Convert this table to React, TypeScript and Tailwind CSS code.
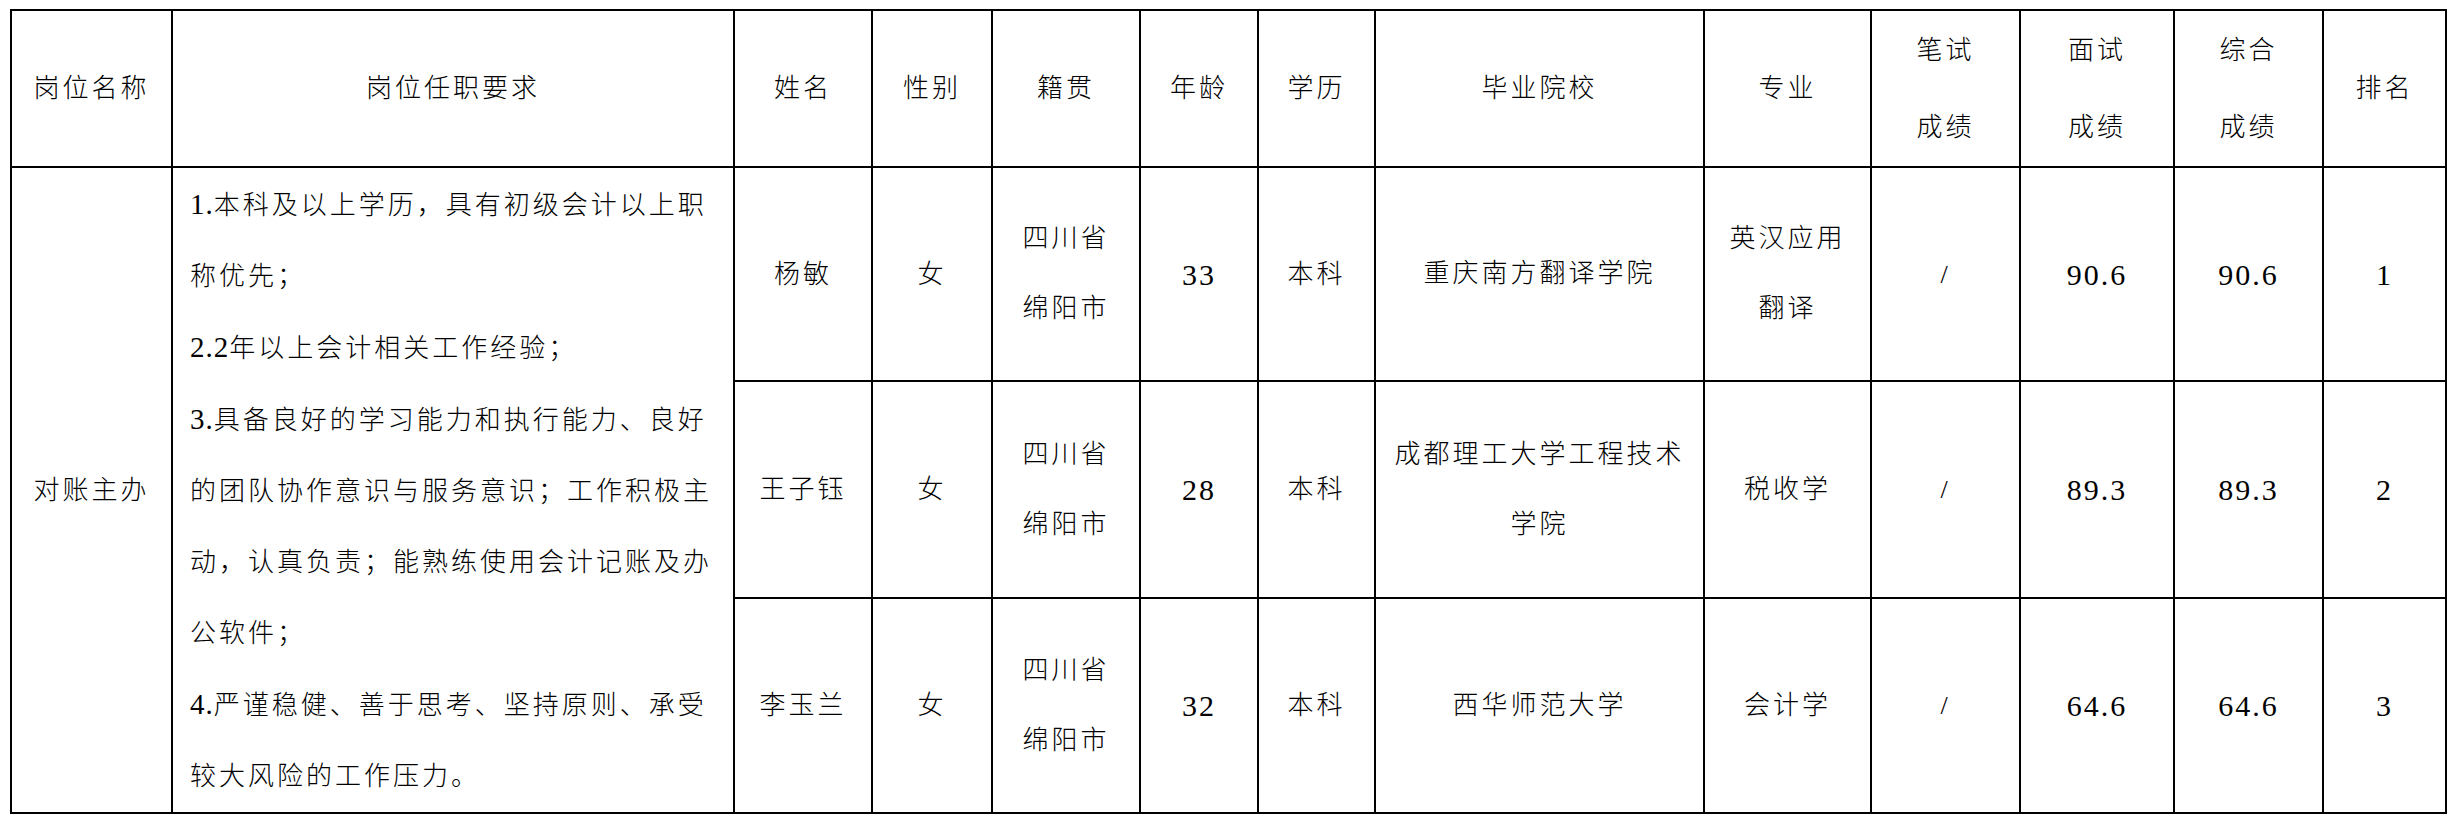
import React from 'react';

const cols = [161, 562, 138, 120, 148, 118, 117, 329, 167, 149, 154, 149, 123];

const requirements = [
  ['1.', '本科及以上学历，具有初级会计以上职'],
  ['', '称优先；'],
  ['2.2', '年以上会计相关工作经验；'],
  ['3.', '具备良好的学习能力和执行能力、良好'],
  ['', '的团队协作意识与服务意识；工作积极主'],
  ['', '动，认真负责；能熟练使用会计记账及办'],
  ['', '公软件；'],
  ['4.', '严谨稳健、善于思考、坚持原则、承受'],
  ['', '较大风险的工作压力。'],
];

const people = [
  { name: '杨敏', school: ['重庆南方翻译学院'], major: ['英汉应用', '翻译'], age: '33', score: '90.6', rank: '1', h: 'h-[214px]' },
  { name: '王子钰', school: ['成都理工大学工程技术', '学院'], major: ['税收学'], age: '28', score: '89.3', rank: '2', h: 'h-[217px]' },
  { name: '李玉兰', school: ['西华师范大学'], major: ['会计学'], age: '32', score: '64.6', rank: '3', h: 'h-[215px]' },
];

const Lines = ({ lines }: { lines: string[] }) => (
  <div className="flex flex-col items-center leading-[70px]">
    {lines.map((l, i) => (
      <span key={i} className="whitespace-nowrap">{l}</span>
    ))}
  </div>
);

const cell = 'border-2 border-black text-center align-middle p-0';
const num = `${cell} text-[30px] tracking-[2px]`;

export default function App() {
  return (
    <div className="w-[2451px] h-[822px] bg-white pt-[9px] pl-[10px] text-black font-['Liberation_Serif','Noto_Sans_CJK_SC',serif] font-light text-[26px] tracking-[3px]">
      <table className="table-fixed border-collapse border-2 border-black w-[2435px]">
        <colgroup>
          {cols.map((w, i) => (
            <col key={i} style={{ width: w }} />
          ))}
        </colgroup>
        <thead>
          <tr className="h-[157px]">
            <th className={`${cell} font-light`}>岗位名称</th>
            <th className={`${cell} font-light`}>岗位任职要求</th>
            <th className={`${cell} font-light`}>姓名</th>
            <th className={`${cell} font-light`}>性别</th>
            <th className={`${cell} font-light`}>籍贯</th>
            <th className={`${cell} font-light`}>年龄</th>
            <th className={`${cell} font-light`}>学历</th>
            <th className={`${cell} font-light`}>毕业院校</th>
            <th className={`${cell} font-light`}>专业</th>
            {['笔试', '面试', '综合'].map((t) => (
              <th key={t} className={`${cell} font-light`}>
                <div className="flex flex-col items-center leading-[77px]">
                  <span>{t}</span>
                  <span>成绩</span>
                </div>
              </th>
            ))}
            <th className={`${cell} font-light`}>排名</th>
          </tr>
        </thead>
        <tbody>
          {people.map((p, i) => (
            <tr key={p.name} className={p.h}>
              {i === 0 && (
                <>
                  <td rowSpan={3} className={cell}>对账主办</td>
                  <td rowSpan={3} className="border-2 border-black align-middle p-0 pl-[17px]">
                    <div className="flex flex-col leading-[71px]">
                      {requirements.map(([n, r], j) => (
                        <span key={j} className="whitespace-nowrap">
                          {n && <span className="text-[29px] tracking-[1px]">{n}</span>}
                          {r}
                        </span>
                      ))}
                    </div>
                  </td>
                </>
              )}
              <td className={cell}>{p.name}</td>
              <td className={cell}>女</td>
              <td className={cell}>
                <Lines lines={['四川省', '绵阳市']} />
              </td>
              <td className={num}>{p.age}</td>
              <td className={cell}>本科</td>
              <td className={cell}>
                <Lines lines={p.school} />
              </td>
              <td className={cell}>
                <Lines lines={p.major} />
              </td>
              <td className={cell}>/</td>
              <td className={num}>{p.score}</td>
              <td className={num}>{p.score}</td>
              <td className={num}>{p.rank}</td>
            </tr>
          ))}
        </tbody>
      </table>
    </div>
  );
}
